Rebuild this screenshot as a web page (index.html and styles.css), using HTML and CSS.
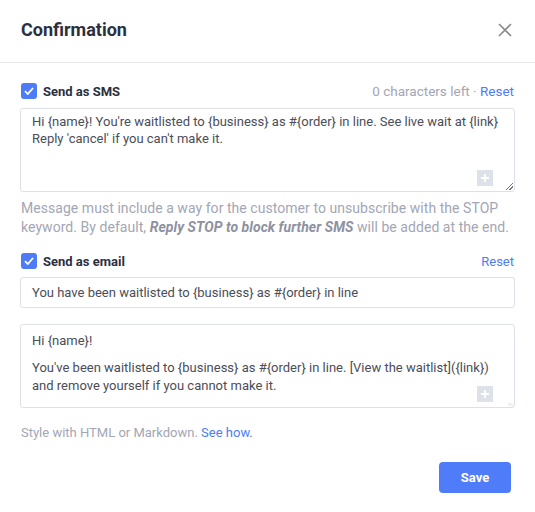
FILE: index.html
```html
<!DOCTYPE html>
<html>
<head>
<meta charset="utf-8">
<link rel="stylesheet" href="styles.css">
</head>
<body>
<div class="dialog">
  <div class="header">
    <h1 class="title">Confirmation</h1>
    <button class="close" aria-label="Close">
      <svg width="14" height="14" viewBox="0 0 14 14"><path d="M1 1L13 13M13 1L1 13" stroke="#8a8a8e" stroke-width="1.6" fill="none"/></svg>
    </button>
  </div>
  <div class="content">
    <div class="row">
      <label class="check"><span class="box"><svg width="10" height="8" viewBox="0 0 10 8"><path d="M1 4.2L3.8 7L9 1" stroke="#fff" stroke-width="1.8" fill="none"/></svg></span>Send as SMS</label>
      <div class="meta">0 characters left · <a class="link">Reset</a></div>
    </div>
    <div class="area">
      <div class="area-text">Hi {name}! You're waitlisted to {business} as #{order} in line. See live wait at {link}<br>Reply 'cancel' if you can't make it.</div>
      <span class="plus"></span>
      <span class="grip"></span>
    </div>
    <p class="help help-sms">Message must include a way for the customer to unsubscribe with the STOP keyword. By default, <b><i>Reply STOP to block further SMS</i></b> will be added at the end.</p>
    <div class="row row-email">
      <label class="check"><span class="box"><svg width="10" height="8" viewBox="0 0 10 8"><path d="M1 4.2L3.8 7L9 1" stroke="#fff" stroke-width="1.8" fill="none"/></svg></span>Send as email</label>
      <a class="link">Reset</a>
    </div>
    <div class="input">You have been waitlisted to {business} as #{order} in line</div>
    <div class="area area-email">
      <div class="area-scroll">
        <div class="area-text email-text">
          <p>Hi {name}!</p>
          <p>You've been waitlisted to {business} as #{order} in line. [View the waitlist]({link})<br>and remove yourself if you cannot make it.</p>
          <p class="spacer"></p>
        </div>
      </div>
      <span class="plus"></span>
      <span class="dot"></span>
    </div>
    <p class="help help-style">Style with HTML or Markdown. <a class="link">See how.</a></p>
  </div>
  <div class="footer">
    <button class="save">Save</button>
  </div>
</div>
</body>
</html>
```
FILE: styles.css
```css
* { box-sizing: border-box; }
html, body { margin: 0; padding: 0; background: #fff; }
body {
  font-family: Roboto, "Helvetica Neue", Arial, sans-serif;
  font-size: 13px;
  color: #4b4d57;
}
.dialog { width: 535px; }
.header {
  height: 63px;
  display: flex;
  align-items: center;
  justify-content: space-between;
  padding: 0 23px 4px 21px;
  border-bottom: 1px solid #e7e7ea;
}
.title {
  margin: 0;
  font-size: 18px;
  font-weight: 700;
  color: #2c2f3e;
}
.close {
  border: 0;
  background: none;
  padding: 0;
  width: 14px;
  height: 14px;
  display: flex;
  cursor: pointer;
  margin-top: 2px;
}
.content { padding: 20px 20px 0 20px; }
.row {
  display: flex;
  align-items: center;
  justify-content: space-between;
  height: 16px;
  padding: 0 1px;
}
.row-email { margin-top: 16px; }
.check {
  display: flex;
  align-items: center;
  gap: 6px;
  font-weight: 700;
  color: #2c2f3e;
  font-size: 13px;
}
.box {
  width: 16px;
  height: 16px;
  background: #4e7cf6;
  border-radius: 3px;
  display: flex;
  align-items: center;
  justify-content: center;
}
.meta { color: #a3a6b4; font-size: 13.5px; }
.link { color: #4d7cf6; text-decoration: none; }
.area {
  position: relative;
  margin-top: 9px;
  height: 84px;
  border: 1px solid #dde0e7;
  border-radius: 3px;
}
.area-text {
  padding: 4px 11px;
  line-height: 17px;
  color: #4b4d57;
}
.email-text { padding-top: 7px; line-height: 18px; }
.email-text p { margin: 0 0 9px; }
.email-text .spacer { height: 40px; }
.plus {
  position: absolute;
  right: 21px;
  bottom: 5px;
  width: 16px;
  height: 16px;
  background: #dde1ea;
}
.plus::before, .plus::after {
  content: "";
  position: absolute;
  background: #fff;
}
.plus::before { left: 4px; top: 7px; width: 8px; height: 2px; }
.plus::after { left: 7px; top: 4px; width: 2px; height: 8px; }
.grip {
  position: absolute;
  right: 1px;
  bottom: 1px;
  width: 7px;
  height: 7px;
  background: linear-gradient(135deg, transparent 45%, #777 45%, #777 55%, transparent 55%, transparent 70%, #777 70%, #777 80%, transparent 80%);
}
.help {
  margin: 7px 0 0;
  line-height: 19px;
  color: #a3a6b4;
  padding-left: 1px;
}
.help-sms { font-size: 14px; letter-spacing: 0.05px; }
.help b { color: #8e91a0; }
.input {
  margin-top: 8px;
  height: 31px;
  border: 1px solid #dde0e7;
  border-radius: 3px;
  padding: 0 11px;
  line-height: 29px;
  color: #4b4d57;
}
.area-email { margin-top: 16px; }
.area-scroll {
  height: 82px;
  overflow-y: scroll;
}
.area-scroll::-webkit-scrollbar { width: 5px; }
.area-scroll::-webkit-scrollbar-track { background: #f1f1f1; }
.area-scroll::-webkit-scrollbar-thumb { background: #7e7e7e; }
.dot {
  position: absolute;
  right: 1px;
  bottom: 1px;
  width: 5px;
  height: 3px;
  background: #f1f1f1;
}
.help-style { margin-top: 15px; }
.footer {
  display: flex;
  justify-content: flex-end;
  padding: 20px 24px 0 0;
}
.save {
  width: 72px;
  height: 31px;
  border: 0;
  border-radius: 4px;
  background: #4f7df9;
  color: #fff;
  font-family: inherit;
  font-size: 13px;
  font-weight: 700;
  cursor: pointer;
}
```
